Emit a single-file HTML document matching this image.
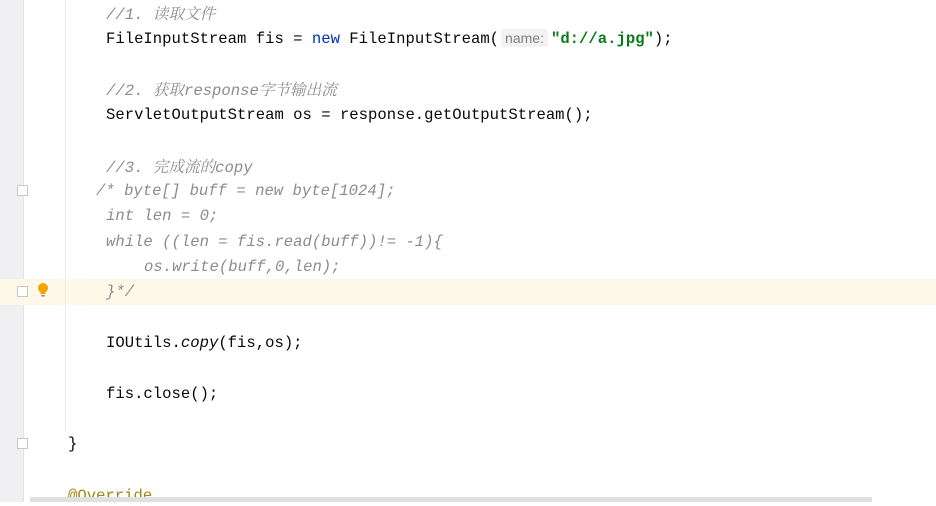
<!DOCTYPE html>
<html><head><meta charset="utf-8"><style>
html,body{margin:0;padding:0}
body{width:936px;height:502px;overflow:hidden;background:#fff;position:relative;font-family:"Liberation Mono","Noto Sans CJK SC",monospace;font-size:15.6px;color:#080808}
.gut{position:absolute;left:0;top:0;width:23px;height:502px;background:#f0f0f2;border-right:1px solid #e4e4e6}
.guide{position:absolute;left:65px;top:0;width:1px;height:432px;background:#ececec}
.hl{position:absolute;left:0;top:279px;width:936px;height:26px;background:#fdf8e7}
.l{position:absolute;white-space:pre;line-height:20px}
.c{color:#8c8c8c;font-style:italic}
.cj{font-family:"Noto Serif CJK SC",serif;font-style:italic;color:#8c8c8c}
.k{color:#0033b3}
.s{color:#067d17;font-weight:bold}
.hint{font-family:"Liberation Sans",sans-serif;font-size:14px;color:#808080;background:#f2f2f2;border-radius:3px;padding:1px 4px;margin:0 3px 0 2px}
.fold{position:absolute;left:17px;width:11px;height:11px;border:1px solid #c8c8c8;background:#fff;box-sizing:border-box}
.bar{position:absolute;left:30px;top:497px;width:842px;height:5px;background:#e0e0e0}
</style></head><body>
<div class="gut"></div>
<div class="hl"></div>
<div class="guide"></div>
<div class="fold" style="top:185px"></div>
<div class="fold" style="top:286px"></div>
<div class="fold" style="top:438px"></div>
<svg style="position:absolute;left:37px;top:282px" width="12" height="18"><circle cx="6" cy="6" r="5" fill="#f5a300"/><rect x="3.5" y="10" width="5" height="2" fill="#f5a300"/><rect x="4" y="13" width="4" height="1.5" fill="#999"/></svg>
<div class="l c" style="left:106px;top:3px">//1. <span class="cj">读取文件</span></div>
<div class="l" style="left:106px;top:28px">FileInputStream fis = <span class="k">new</span> FileInputStream(<span class="hint">name:</span><span class="s">"d://a.jpg"</span>);</div>
<div class="l c" style="left:106px;top:79px">//2. <span class="cj">获取</span>response<span class="cj">字节输出流</span></div>
<div class="l" style="left:106px;top:105px">ServletOutputStream os = response.getOutputStream();</div>
<div class="l c" style="left:106px;top:156px">//3. <span class="cj">完成流的</span>copy</div>
<div class="l c" style="left:96px;top:181px">/* byte[] buff = new byte[1024];</div>
<div class="l c" style="left:106px;top:206px">int len = 0;</div>
<div class="l c" style="left:106px;top:232px">while ((len = fis.read(buff))!= -1){</div>
<div class="l c" style="left:144px;top:257px">os.write(buff,0,len);</div>
<div class="l c" style="left:106px;top:282px">}*/</div>
<div class="l" style="left:106px;top:333px">IOUtils.<i>copy</i>(fis,os);</div>
<div class="l" style="left:106px;top:384px">fis.close();</div>
<div class="l" style="left:68px;top:434px">}</div>
<div class="l" style="left:68px;top:486px;color:#9e880d">@Override</div>
<div class="bar"></div>
</body></html>
